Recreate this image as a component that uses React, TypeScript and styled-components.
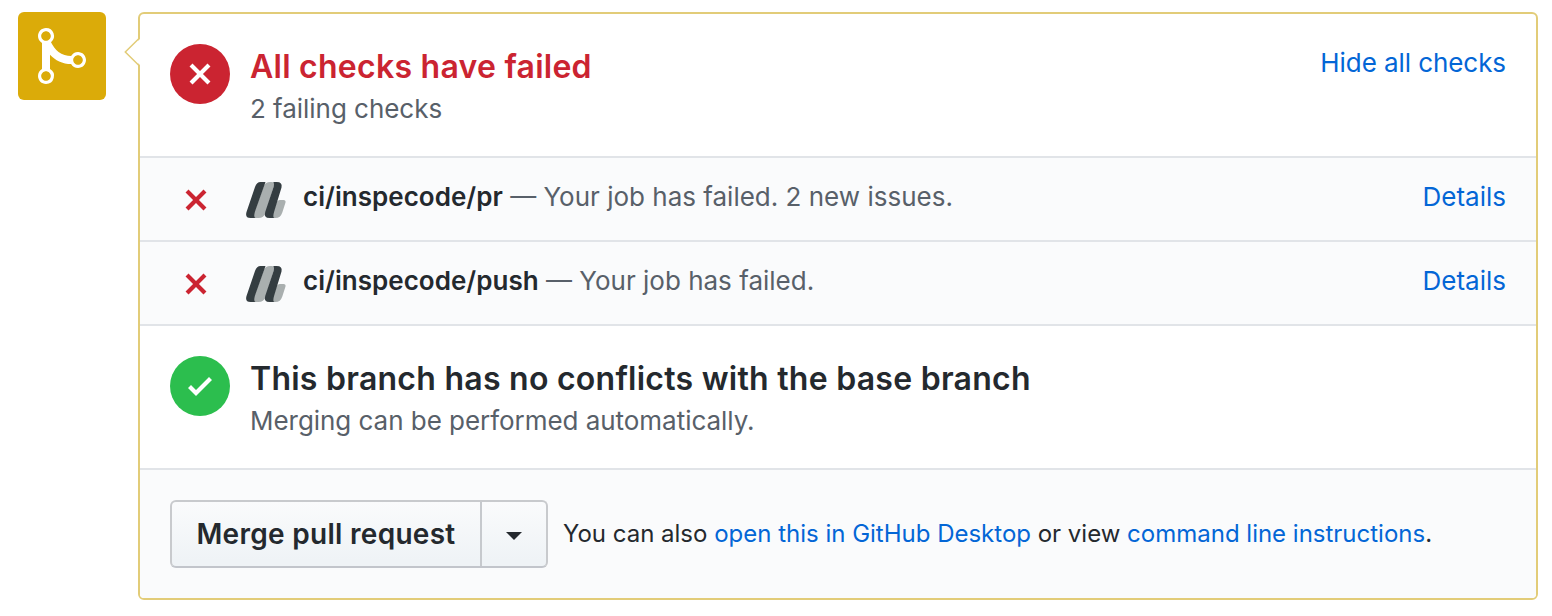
import React from 'react';
import styled, { createGlobalStyle } from 'styled-components';

const GlobalStyle = createGlobalStyle`
  * { box-sizing: border-box; }
  body {
    margin: 0;
    background: #fff;
    color: #24292e;
    font-family: Inter, "Liberation Sans", sans-serif;
  }
`;

const Page = styled.main`
  display: flex;
  align-items: flex-start;
  gap: 32px;
  width: 1552px;
  height: 616px;
  padding: 12px 14px 16px 18px;
`;

const MergeBadge = styled.div`
  display: flex;
  align-items: center;
  justify-content: center;
  flex: none;
  width: 88px;
  height: 88px;
  border-radius: 6px;
  background: #dbab09;
  color: #fff;
`;

const Panel = styled.section`
  position: relative;
  flex: none;
  width: 1400px;
  height: 588px;
  border: 2px solid #e2cc78;
  border-radius: 6px;
`;

const Pointer = styled.svg`
  position: absolute;
  left: -16px;
  top: 22px;
`;

const StatusSection = styled.div`
  display: flex;
  align-items: flex-start;
  height: 144px;
  padding: 30px;
  border-bottom: 2px solid #e1e4e8;
`;

const StatusCircle = styled.div<{ $color: string }>`
  display: flex;
  align-items: center;
  justify-content: center;
  flex: none;
  width: 60px;
  height: 60px;
  margin-right: 20px;
  border-radius: 50%;
  background: ${(p) => p.$color};
  color: #fff;
`;

const StatusBody = styled.div`
  flex: 1;
  white-space: nowrap;
`;

const Heading = styled.h3<{ $color?: string }>`
  margin: 1px 0 0;
  font-size: 32px;
  font-weight: 600;
  line-height: 44px;
  letter-spacing: 0.255px;
  color: ${(p) => p.$color ?? '#24292e'};
`;

const Note = styled.span`
  display: block;
  font-size: 26px;
  line-height: 40px;
  letter-spacing: -0.04px;
  color: #586069;
`;

const Link = styled.a`
  color: #0366d6;
  text-decoration: none;
`;

const ActionLink = styled(Link)<{ $spacing?: number }>`
  font-size: 26px;
  line-height: 37px;
  letter-spacing: ${(p) => p.$spacing ?? 0}px;
  white-space: nowrap;
`;

const CheckRow = styled.div`
  display: flex;
  align-items: flex-start;
  height: 84px;
  padding: 20px 30px 0 44px;
  background: #fafbfc;
  border-bottom: 2px solid #e1e4e8;
`;

const RowMark = styled.span`
  display: flex;
  width: 62px;
  padding-top: 6px;
  color: #cb2431;
`;

const RowLogo = styled.span`
  display: flex;
  width: 57px;
  padding-top: 4px;
`;

const RowText = styled.div`
  flex: 1;
  font-size: 26px;
  line-height: 37px;
  white-space: nowrap;
  color: #586069;
`;

const CheckName = styled.strong`
  font-weight: 600;
  letter-spacing: 0.03px;
  color: #24292e;
`;

const Footer = styled.footer`
  display: flex;
  align-items: flex-start;
  height: 128px;
  padding: 30px;
  border-radius: 0 0 4px 4px;
  background: #fafbfc;
`;

const ButtonGroup = styled.div`
  display: flex;
  flex: none;
  width: 378px;
  height: 68px;
  margin-right: 15px;
  border: 2px solid #c8cacd;
  border-bottom-color: #c2c5cb;
  border-radius: 6px;
  background: linear-gradient(#fafbfc, #eff3f6 90%);
`;

const MergeButton = styled.button`
  width: 308px;
  padding: 0;
  border: 0;
  background: none;
  color: #24292e;
  font: 600 28px/42px Inter, "Liberation Sans", sans-serif;
  letter-spacing: 0.29px;
  white-space: nowrap;
`;

const CaretButton = styled.button`
  display: flex;
  align-items: center;
  justify-content: center;
  flex: 1;
  padding: 4px 0 0;
  border: 0;
  border-left: 2px solid #c6c9cd;
  background: none;
`;

const Caret = styled.span`
  border: 8px solid transparent;
  border-top-color: #24292e;
  border-bottom: 0;
`;

const FooterText = styled.p`
  margin: 16px 0 0;
  font-size: 24px;
  line-height: 36px;
  letter-spacing: -0.005px;
  white-space: nowrap;
`;

const MergeIcon = () => (
  <svg width="48" height="64" viewBox="0 0 12 16" fill="currentColor">
    <path
      fillRule="evenodd"
      d="M10 7c-.73 0-1.38.41-1.73 1.02V8C7.22 7.98 6 7.64 5.14 6.98c-.75-.58-1.5-1.61-1.89-2.44A1.993 1.993 0 0 0 2 .99C.89.99 0 1.89 0 3a2 2 0 0 0 1 1.720v6.56c-.59.35-1 .99-1 1.72 0 1.11.89 2 2 2a1.993 1.993 0 0 0 1-3.720V7.67c.67.7 1.44 1.27 2.3 1.69.86.42 2.03.63 2.97.64v-.02c.36.61 1 1.02 1.73 1.02 1.11 0 2-.89 2-2 0-1.11-.89-2-2-2zm-6.8 6c0 .66-.55 1.2-1.2 1.2-.65 0-1.2-.55-1.2-1.2 0-.65.55-1.2 1.2-1.2.65 0 1.2.55 1.2 1.2zM2 4.2C1.34 4.2.8 3.65.8 3c0-.65.55-1.2 1.2-1.2.65 0 1.2.55 1.2 1.2 0 .65-.55 1.2-1.2 1.2zm8 6c-.66 0-1.2-.55-1.2-1.2 0-.65.55-1.2 1.2-1.2.65 0 1.2.55 1.2 1.2 0 .65-.55 1.2-1.2 1.2z"
    />
  </svg>
);

const CrossIcon = () => (
  <svg width="24" height="32" viewBox="0 0 12 16" fill="currentColor">
    <path d="M7.48 8l3.75 3.75-1.48 1.48L6 9.48l-3.75 3.75-1.48-1.48L4.52 8 .77 4.25l1.48-1.48L6 6.52l3.75-3.75 1.48 1.48L7.48 8z" />
  </svg>
);

const CheckIcon = () => (
  <svg width="24" height="32" viewBox="0 0 12 16" fill="currentColor">
    <path d="M12 5l-8 8-4-4 1.500-1.500L4 10l6.500-6.500L12 5z" />
  </svg>
);

const InspecodeLogo = () => (
  <svg width="40" height="36" viewBox="0 0 40 36">
    <path fill="#a9afaf" d="M24 0h1.500q3.500 0 2.500 3.500L19.800 30.500Q17.800 36 12.500 36H8V31L18 3.500Q19.500 0 24 0z" />
    <path fill="#a9afaf" d="M33.500 18h4Q40 18 39.500 20.500L36.300 30.500Q34.500 36 29.500 36H27v-5l3.500-10.500Q31.300 18 33.500 18z" />
    <path fill="#343d41" d="M14.500 0H19.500L9 29.500Q7.300 35.500 9.500 36H4.500Q-1.200 36 .5 30L9 5Q10.800 0 14.500 0z" />
    <path fill="#343d41" d="M27.200 0h3.500q6 0 4.800 5.500L28.200 29.500Q26.300 35.500 28.500 36H23.500Q17.500 36 19.200 30L27.400 5.500Q28.700 1.500 27.200 0z" />
  </svg>
);

type Check = { name: string; message: string };

const checks: Check[] = [
  { name: 'ci/inspecode/pr', message: 'Your job has failed. 2 new issues.' },
  { name: 'ci/inspecode/push', message: 'Your job has failed.' },
];

export default function App() {
  return (
    <>
      <GlobalStyle />
      <Page>
        <MergeBadge>
          <MergeIcon />
        </MergeBadge>
        <Panel>
          <Pointer width="17" height="32" viewBox="0 0 17 32">
            <path d="M17 2L2 16L17 30z" fill="#fff" />
            <path d="M15.500 2L1.300 16L15.500 30" fill="none" stroke="#e2cc78" strokeWidth="1.500" />
          </Pointer>
          <StatusSection>
            <StatusCircle $color="#cb2431">
              <CrossIcon />
            </StatusCircle>
            <StatusBody>
              <Heading $color="#cb2431">All checks have failed</Heading>
              <Note>2 failing checks</Note>
            </StatusBody>
            <ActionLink $spacing={-0.07}>Hide all checks</ActionLink>
          </StatusSection>
          {checks.map((check) => (
            <CheckRow key={check.name}>
              <RowMark>
                <CrossIcon />
              </RowMark>
              <RowLogo>
                <InspecodeLogo />
              </RowLogo>
              <RowText>
                <CheckName>{check.name}</CheckName> — {check.message}
              </RowText>
              <ActionLink>Details</ActionLink>
            </CheckRow>
          ))}
          <StatusSection>
            <StatusCircle $color="#2cbe4e">
              <CheckIcon />
            </StatusCircle>
            <StatusBody>
              <Heading>This branch has no conflicts with the base branch</Heading>
              <Note>Merging can be performed automatically.</Note>
            </StatusBody>
          </StatusSection>
          <Footer>
            <ButtonGroup>
              <MergeButton>Merge pull request</MergeButton>
              <CaretButton aria-label="Select merge method">
                <Caret />
              </CaretButton>
            </ButtonGroup>
            <FooterText>
              You can also <Link>open this in GitHub Desktop</Link> or view <Link>command line instructions</Link>.
            </FooterText>
          </Footer>
        </Panel>
      </Page>
    </>
  );
}
